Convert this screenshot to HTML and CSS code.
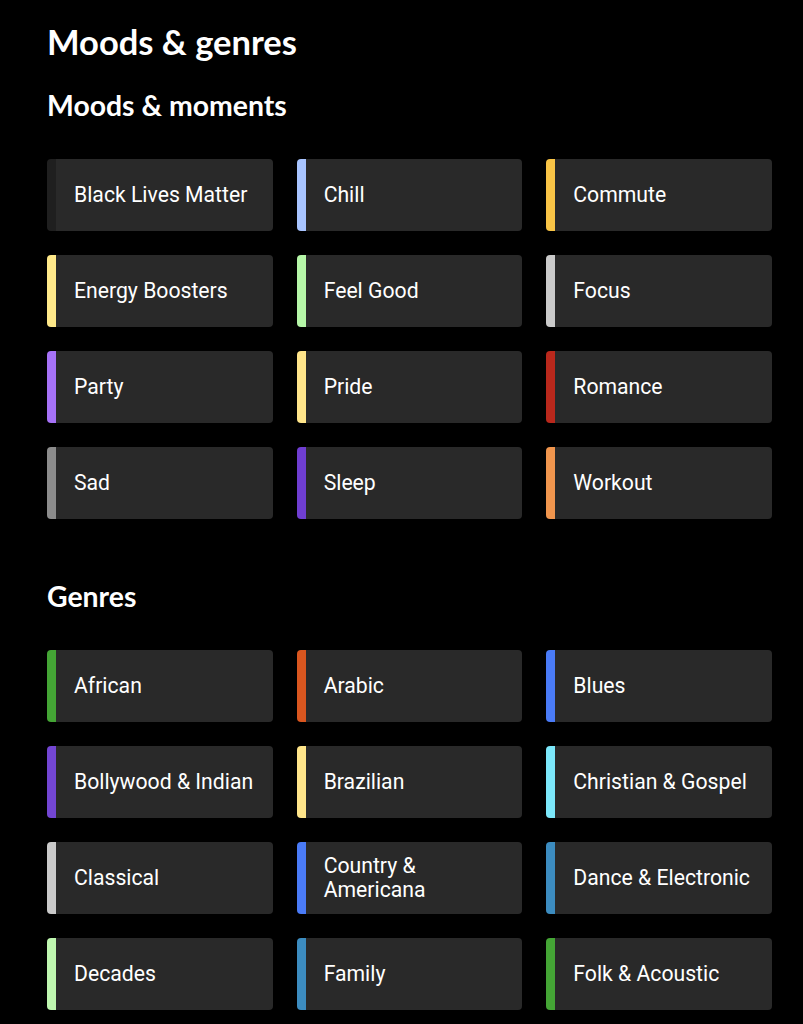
FILE: index.html
```html
<!DOCTYPE html>
<html>
<head>
<meta charset="utf-8">
<link rel="stylesheet" href="styles.css">
</head>
<body>
<main class="page">
  <h1 class="title">Moods &amp; genres</h1>
  <section class="section">
    <h2 class="section-title">Moods &amp; moments</h2>
    <div class="grid">
      <a class="tile" style="--c:#1f1f1f">Black Lives Matter</a>
      <a class="tile" style="--c:#a8c4ff">Chill</a>
      <a class="tile" style="--c:#f9c446">Commute</a>
      <a class="tile" style="--c:#ffe98a">Energy Boosters</a>
      <a class="tile" style="--c:#b6f7a8">Feel Good</a>
      <a class="tile" style="--c:#cacaca">Focus</a>
      <a class="tile" style="--c:#a672f7">Party</a>
      <a class="tile" style="--c:#ffe58a">Pride</a>
      <a class="tile" style="--c:#b9281c">Romance</a>
      <a class="tile" style="--c:#8c8c8c">Sad</a>
      <a class="tile" style="--c:#6f3ed1">Sleep</a>
      <a class="tile" style="--c:#f0954d">Workout</a>
    </div>
  </section>
  <section class="section genres">
    <h2 class="section-title">Genres</h2>
    <div class="grid">
      <a class="tile" style="--c:#44a535">African</a>
      <a class="tile" style="--c:#d9561f">Arabic</a>
      <a class="tile" style="--c:#4a7bf7">Blues</a>
      <a class="tile" style="--c:#7346d3">Bollywood &amp; Indian</a>
      <a class="tile" style="--c:#ffe58a">Brazilian</a>
      <a class="tile" style="--c:#7ce8fb">Christian &amp; Gospel</a>
      <a class="tile" style="--c:#cacaca">Classical</a>
      <a class="tile" style="--c:#4a7bf7">Country &amp; Americana</a>
      <a class="tile" style="--c:#3c8cc0">Dance &amp; Electronic</a>
      <a class="tile" style="--c:#bff7b0">Decades</a>
      <a class="tile" style="--c:#3c8cc0">Family</a>
      <a class="tile" style="--c:#44a535">Folk &amp; Acoustic</a>
    </div>
  </section>
</main>
</body>
</html>
```
FILE: styles.css
```css
html, body {
  margin: 0;
  padding: 0;
  background: #000;
  color: #fff;
}
.page {
  padding: 22px 31px 0 47px;
}
.title {
  margin: 0;
  font-family: Lato, "Noto Sans", sans-serif;
  font-weight: 700;
  font-size: 34.5px;
  line-height: 40px;
}
.section-title {
  margin: 0;
  font-family: Lato, "Noto Sans", sans-serif;
  font-weight: 700;
  font-size: 28.4px;
  line-height: 32px;
}
.section {
  margin-top: 27px;
}
.genres {
  margin-top: 61px;
}
.grid {
  margin-top: 38px;
  display: grid;
  grid-template-columns: repeat(3, 1fr);
  column-gap: 24px;
  row-gap: 24px;
}
.tile {
  height: 72px;
  box-sizing: border-box;
  background: #292929;
  border-radius: 4px;
  border-left: 9px solid var(--c);
  padding: 0 16px 0 18px;
  display: flex;
  align-items: center;
  font-family: Roboto, "Liberation Sans", sans-serif;
  font-weight: 400;
  font-size: 21.2px;
  line-height: 24px;
  color: #fff;
}
```
